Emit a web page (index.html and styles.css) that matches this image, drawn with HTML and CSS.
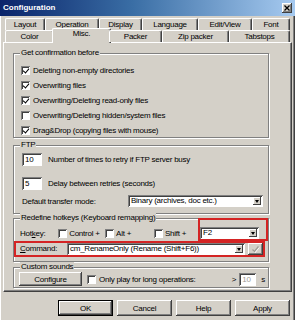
FILE: index.html
```html
<!DOCTYPE html>
<html lang="en">
<head>
    <meta charset="UTF-8">
    <title>Configuration</title>
    <link rel="stylesheet" href="styles.css">
</head>
<body>
    <div class="window">
        <div class="titlebar">
            <span class="title">Configuration</span>
            <span class="close">
                <svg width="6" height="6" viewBox="0 0 6 6"><path d="M0.5 0.5L5.5 5.5M5.5 0.5L0.5 5.5" stroke="#000" stroke-width="1.3"/></svg>
            </span>
        </div>
        <div class="content">
            <div class="tabs">
                <div class="tab-row back">
                    <div class="tab">Layout</div>
                    <div class="tab">Operation</div>
                    <div class="tab">Display</div>
                    <div class="tab">Language</div>
                    <div class="tab">Edit/View</div>
                    <div class="tab">Font</div>
                </div>
                <div class="tab-row front">
                    <div class="tab">Color</div>
                    <div class="tab active">Misc.</div>
                    <div class="tab">Packer</div>
                    <div class="tab">Zip packer</div>
                    <div class="tab">Tabstops</div>
                </div>
            </div>

            <div class="panel">
                <div class="group confirm">
                    <span class="group-title">Get confirmation before</span>
                    <div class="check-list">
                        <div class="check-row"><span class="check on"></span>Deleting non-empty directories</div>
                        <div class="check-row"><span class="check on"></span>Overwriting files</div>
                        <div class="check-row"><span class="check on"></span>Overwriting/Deleting read-only files</div>
                        <div class="check-row"><span class="check"></span>Overwriting/Deleting hidden/system files</div>
                        <div class="check-row"><span class="check on"></span>Drag&amp;Drop (copying files with mouse)</div>
                    </div>
                </div>

                <div class="group ftp">
                    <span class="group-title">FTP</span>
                    <div class="field-row first">
                        <span class="field small">10</span>
                        <span class="field-label">Number of times to retry if FTP server busy</span>
                    </div>
                    <div class="field-row second">
                        <span class="field small">5</span>
                        <span class="field-label">Delay between retries (seconds)</span>
                    </div>
                    <div class="mode-row">
                        <span class="mode-label">Default transfer mode:</span>
                        <div class="combo binary">
                            <span class="combo-text">Binary (archives, doc etc.)</span>
                            <span class="drop"></span>
                        </div>
                    </div>
                </div>

                <div class="group hotkeys">
                    <span class="group-title">Redefine hotkeys (Keyboard remapping)</span>
                    <div class="hotkey-row">
                        <span class="hk-label">Hot<u>k</u>ey:</span>
                        <span class="hk-item ctrl"><span class="check"></span><span>Control +</span></span>
                        <span class="hk-item alt"><span class="check"></span><span>Alt +</span></span>
                        <span class="hk-item shift"><span class="check"></span><span>Shift +</span></span>
                        <span class="mark key-mark">
                            <span class="combo key">
                                <span class="combo-text">F2</span>
                                <span class="drop"></span>
                            </span>
                        </span>
                    </div>
                    <div class="mark command-mark">
                        <span class="cmd-label"><u>C</u>ommand:</span>
                        <span class="combo command">
                            <span class="combo-text">cm_RenameOnly (Rename (Shift+F6))</span>
                            <span class="drop"></span>
                        </span>
                        <span class="tick-btn">
                            <svg width="9" height="8" viewBox="0 0 9 8"><path d="M1.5 4.5L3.5 6.5L7.5 1.5" fill="none" stroke="#fff" stroke-width="1.4" transform="translate(0.6 0.6)"/><path d="M1.5 4.5L3.5 6.5L7.5 1.5" fill="none" stroke="#a09c94" stroke-width="1.4"/></svg>
                        </span>
                    </div>
                </div>

                <div class="group sounds">
                    <span class="group-title">Custom sounds</span>
                    <div class="sound-row">
                        <span class="button configure">Configure</span>
                        <span class="check"></span>
                        <span class="sound-label">Only play for long operations:</span>
                        <span class="min-part">
                            <span>&gt;</span>
                            <span class="field tiny disabled">10</span>
                            <span>s</span>
                        </span>
                    </div>
                </div>
            </div>

            <div class="buttons">
                <span class="button default">OK</span>
                <span class="button">Cancel</span>
                <span class="button">Help</span>
                <span class="button">Apply</span>
            </div>
        </div>
    </div>
</body>
</html>
```

FILE: styles.css
```css
body {
    margin: 0;
    padding: 0;
    background-color: #d4d0c8;
    font-family: "Liberation Sans", Arial, sans-serif;
    font-size: 8px;
    letter-spacing: -0.25px;
    color: #000;
}

.window {
    width: 295px;
    height: 320px;
    overflow: hidden;
    background-color: #d4d0c8;
    box-shadow: inset 1px 0 #fff, inset -1px 0 #404040, inset -2px 0 #808080;
}

.titlebar {
    display: flex;
    align-items: center;
    height: 16px;
    padding-left: 3px;
    background: linear-gradient(to right, #0a246a, #3a6ea5 45%, #a6caf0);
}

.title {
    flex: 1;
    color: #fff;
    font-weight: bold;
    letter-spacing: 0;
    line-height: 16px;
}

.close {
    display: flex;
    justify-content: center;
    align-items: center;
    width: 10px;
    height: 10px;
    margin-right: 3px;
    background-color: #d4d0c8;
    box-shadow: inset -1px -1px #404040, inset 1px 1px #fff, inset -2px -2px #808080;
}

.content {
    padding: 0 3px;
}

/* tabs */
.tabs {
    position: relative;
    z-index: 1;
    margin-top: 2px;
    padding-left: 2px;
}

.tab-row {
    display: grid;
    height: 12px;
}

.back {
    grid-template-columns: 40px 54px 43px 56px 54px 38px;
}

.front {
    grid-template-columns: 49px 55px 53px 67px 61px;
}

.tab {
    height: 12px;
    box-sizing: border-box;
    border-top: 1px solid #fff;
    border-left: 1px solid #fff;
    border-right: 1px solid #404040;
    border-radius: 2px 2px 0 0;
    box-shadow: inset -1px 0 #808080;
    background-color: #d4d0c8;
    text-align: center;
    line-height: 11px;
}

.tab.active {
    height: 15px;
    margin: -2px -2px 0;
    line-height: 10px;
}

/* page */
.panel {
    height: 250px;
    box-sizing: border-box;
    padding-left: 9px;
    border-top: 1px solid #fff;
    border-left: 1px solid #fff;
    border-right: 1px solid #404040;
    border-bottom: 1px solid #404040;
    box-shadow: inset -1px -1px #808080;
}

.group {
    width: 256px;
    box-sizing: border-box;
    border: 1px solid #808080;
    box-shadow: 1px 1px 0 #fff, inset 1px 1px 0 #fff;
}

.group-title {
    display: table;
    margin: -6px 0 0 6px;
    padding: 0 1px;
    line-height: 10px;
    background-color: #d4d0c8;
}

.confirm {
    height: 85px;
    margin-top: 10px;
}

.check-list {
    padding: 5px 0 0 7px;
}

.check-row {
    display: flex;
    align-items: center;
    height: 15px;
}

.check {
    flex: none;
    display: flex;
    justify-content: center;
    align-items: center;
    width: 9px;
    height: 9px;
    margin-right: 3px;
    background-color: #fff;
    box-shadow: inset 1px 1px #808080, inset -1px -1px #fff, inset 2px 2px #404040;
}

.check.on::after {
    content: "";
    width: 3px;
    height: 5px;
    margin: -2px 0 0 1px;
    border-right: 1.5px solid #000;
    border-bottom: 1.5px solid #000;
    transform: rotate(40deg);
}

/* ftp */
.ftp {
    height: 69px;
    margin-top: 7px;
}

.field-row {
    display: flex;
    align-items: center;
    height: 13px;
    padding-left: 8px;
}

.field-row.first {
    margin-top: 3px;
}

.field-row.second {
    margin-top: 11px;
}

.field {
    box-sizing: border-box;
    height: 13px;
    padding: 2px 0 0 3px;
    line-height: 9px;
    background-color: #fff;
    box-shadow: inset 1px 1px #808080, inset -1px -1px #fff, inset 2px 2px #404040;
}

.field.small {
    width: 20px;
}

.field-label {
    margin-left: 6px;
}

.mode-row {
    display: flex;
    align-items: center;
    height: 12px;
    margin-top: 5px;
    padding-left: 8px;
}

.mode-label {
    width: 106px;
}

.combo {
    display: flex;
    box-sizing: border-box;
    height: 12px;
    padding: 2px;
    background-color: #fff;
    box-shadow: inset 1px 1px #808080, inset -1px -1px #fff, inset 2px 2px #404040;
}

.combo-text {
    flex: 1;
    padding-left: 1px;
    line-height: 8px;
    white-space: nowrap;
    overflow: hidden;
}

.drop {
    display: flex;
    justify-content: center;
    align-items: center;
    width: 8px;
    background-color: #d4d0c8;
    box-shadow: inset -1px -1px #404040, inset 1px 1px #fff;
}

.drop::after {
    content: "";
    border-left: 2.5px solid transparent;
    border-right: 2.5px solid transparent;
    border-top: 3px solid #000;
}

.binary {
    width: 135px;
}

/* hotkeys */
.hotkeys {
    margin-top: 4px;
    padding-bottom: 4px;
}

.hotkey-row {
    display: flex;
    align-items: flex-end;
    margin-top: -5px;
    padding-left: 6px;
}

.hk-label,
.hk-item {
    display: flex;
    align-items: center;
    height: 12px;
    margin-bottom: 2px;
}

.hk-label {
    width: 39px;
}

.hk-item.ctrl {
    width: 48px;
}

.hk-item.alt {
    width: 50px;
}

.hk-item.shift {
    width: 45px;
}

.hk-item .check {
    margin-right: 2px;
}

.mark {
    border: 2px solid #d42424;
}

.key-mark {
    padding: 7px 7px 0 0;
}

.key {
    width: 59px;
}

.command-mark {
    display: flex;
    width: 251px;
    box-sizing: border-box;
}

.cmd-label {
    width: 51px;
    padding-left: 4px;
    box-sizing: border-box;
    line-height: 12px;
}

.command {
    width: 178px;
}

.tick-btn {
    display: flex;
    justify-content: center;
    align-items: center;
    width: 15px;
    height: 12px;
    margin-left: 3px;
    background-color: #d4d0c8;
    box-shadow: inset -1px -1px #404040, inset 1px 1px #fff, inset -2px -2px #808080;
}

/* sounds */
.sounds {
    margin-top: 5px;
    padding-bottom: 1px;
}

.sound-row {
    display: flex;
    align-items: center;
    height: 14px;
    padding: 0 3px 0 5px;
}

.sound-row .check {
    margin-left: 5px;
}

.min-part {
    display: flex;
    align-items: center;
    gap: 3px;
    margin-left: auto;
}

.field.tiny {
    width: 17px;
    margin-right: 2px;
}

.field.disabled {
    color: #a09c94;
}

/* buttons */
.button {
    display: flex;
    justify-content: center;
    align-items: center;
    box-sizing: border-box;
    width: 55px;
    height: 16px;
    background-color: #d4d0c8;
    box-shadow: inset -1px -1px #404040, inset 1px 1px #fff, inset -2px -2px #808080;
}

.configure {
    width: 63px;
    height: 14px;
}

.buttons {
    display: flex;
    justify-content: flex-end;
    gap: 4px;
    margin-top: 8px;
    padding-right: 2px;
}

.button.default {
    border: 1px solid #000;
    box-shadow: inset -1px -1px #404040, inset 1px 1px #fff, inset -2px -2px #808080;
}
```
